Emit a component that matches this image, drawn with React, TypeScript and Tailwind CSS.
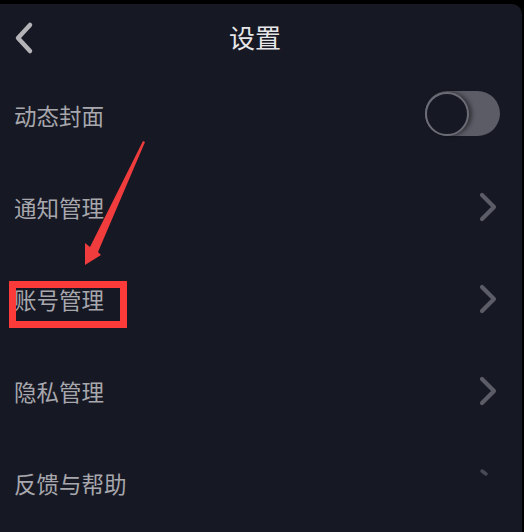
import React from "react";

const font = { fontFamily: '"Noto Sans CJK SC", "Noto Sans", sans-serif' };

const Chevron: React.FC<{ partial?: boolean }> = ({ partial }) => (
  <svg width="18" height="30" viewBox="0 0 18 30" className="shrink-0">
    {partial ? (
      <path d="M3 3 L7 6" stroke="#5d5e68" strokeWidth="3.5" strokeLinecap="round" fill="none" opacity="0.7" />
    ) : (
      <path d="M3 3 L15 15 L3 27" stroke="#5b5c66" strokeWidth="4.2" strokeLinecap="round" strokeLinejoin="round" fill="none" />
    )}
  </svg>
);

const Toggle: React.FC = () => (
  <div className="w-[75px] h-[45px] rounded-full bg-[#5b5c66] flex items-center mt-[-3px]">
    <div className="w-[44px] h-[44px] rounded-full bg-[#161823] border-[2px] border-[#6b6c75] shadow-[3px_0_4px_rgba(0,0,0,0.45)]" />
  </div>
);

const rows: { label: string; right: "toggle" | "chevron" | "partial" }[] = [
  { label: "动态封面", right: "toggle" },
  { label: "通知管理", right: "chevron" },
  { label: "账号管理", right: "chevron" },
  { label: "隐私管理", right: "chevron" },
  { label: "反馈与帮助", right: "partial" },
];

export default function App() {
  return (
    <div className="w-[524px] h-[532px] bg-black pt-[4px] overflow-hidden" style={font}>
      <div className="relative h-[528px] bg-[#161823] rounded-tr-[10px] mr-[2px]">
        {/* Header */}
        <div className="relative h-[65px] flex items-center justify-center pr-[12px]">
          <svg width="24" height="34" viewBox="0 0 24 34" className="absolute left-[11px] top-[17px]">
            <path d="M19 4 L7 17 L19 30" stroke="#b3b3b8" strokeWidth="4.5" strokeLinecap="round" strokeLinejoin="round" fill="none" />
          </svg>
          <span className="text-[26px] text-[#e6e6e8] leading-none">设置</span>
        </div>

        {/* Rows */}
        {rows.map((row) => (
          <div key={row.label} className="h-[92px] flex items-center justify-between pl-[14px] pr-[22px]">
            <span className="text-[22.5px] text-[#a7a7ad] leading-none">{row.label}</span>
            {row.right === "toggle" ? (
              <Toggle />
            ) : (
              <div className="pr-[3px]">
                <Chevron partial={row.right === "partial"} />
              </div>
            )}
          </div>
        ))}

        {/* Annotation: arrow */}
        <svg width="524" height="528" className="absolute left-0 top-0 pointer-events-none" viewBox="0 0 524 528">
          <polygon points="143,137 145,138 98,248 101,251 85,261 85,239 90,243" fill="#f03c3c" />
        </svg>
        {/* Annotation: box */}
        <div className="absolute left-[9px] top-[277px] w-[118px] h-[47px] border-[7px] border-[#fb3a3a]" />
      </div>
    </div>
  );
}
